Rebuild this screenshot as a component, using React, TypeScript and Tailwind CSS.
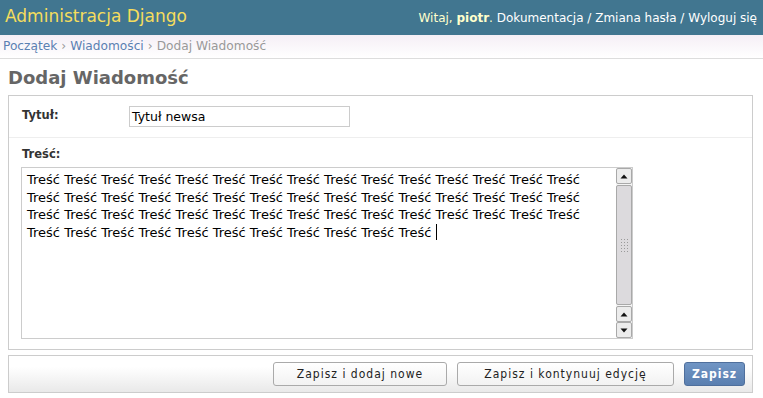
import React from "react";

const WORD = "Treść";

function line(n: number) {
  return Array.from({ length: n }, () => WORD).join(" ");
}

function Arrow({ down }: { down?: boolean }) {
  return (
    <svg width="8" height="5" viewBox="0 0 8 5" className="block">
      {down ? <path d="M0.5 0.5h7L4 4.5z" fill="#111" /> : <path d="M0.5 4.5h7L4 0.5z" fill="#111" />}
    </svg>
  );
}

function ScrollButton({ down }: { down?: boolean }) {
  return (
    <div className="h-[16px] w-full rounded-[2px] border border-[#a9a9a9] bg-[#ececec] flex items-center justify-center">
      <Arrow down={down} />
    </div>
  );
}

function FakeScrollbar() {
  return (
    <div className="absolute right-0 top-0 bottom-0 w-[16px] flex flex-col bg-[#f4f4f4]">
      <ScrollButton />
      <div className="flex-1 mt-px mb-px rounded-[2px] border border-[#a9a9a9] bg-[#dcdadd] flex items-center justify-center">
        <div className="grid grid-cols-3 gap-x-[2px] gap-y-[2px]">
          {Array.from({ length: 15 }).map((_, i) => (
            <span key={i} className="w-px h-px bg-[#9a9a9a]" />
          ))}
        </div>
      </div>
      <ScrollButton />
      <ScrollButton down />
    </div>
  );
}

export default function App() {
  return (
    <div className="w-[763px] h-[398px] bg-white font-['DejaVu_Sans',sans-serif] text-[#333] overflow-hidden">
      {/* header */}
      <div className="h-[35px] bg-[#417690] flex items-center justify-between pl-[5px] pr-[6px]">
        <span className="text-[17px] leading-[20px] text-[#f5dd5d] pb-[3px]">Administracja Django</span>
        <span className="text-[12px] leading-[14px] text-white">
          <span className="text-[#ffffcc]">
            Witaj, <strong className="font-bold">piotr</strong>.
          </span>{" "}
          Dokumentacja / Zmiana hasła / Wyloguj się
        </span>
      </div>

      {/* breadcrumbs */}
      <div className="h-[24px] border-b border-[#dddddd] bg-linear-to-b from-[#f5eff6] to-white flex items-center pl-[3px] text-[12.2px] text-[#999]">
        <span className="text-[#5b80b2]">Początek</span>
        <span className="mx-[4px]">›</span>
        <span className="text-[#5b80b2]">Wiadomości</span>
        <span className="mx-[4px]">›</span>
        <span>Dodaj Wiadomość</span>
      </div>

      <div className="px-[8px] pt-[8px]">
        <h1 className="text-[18px] leading-[21px] font-bold text-[#666] mb-[7px]">Dodaj Wiadomość</h1>

        {/* fieldset */}
        <div className="w-[745px] border border-[#cccccc]">
          <div className="flex items-start pl-[13px] pt-[10px] pb-[10px] border-b border-[#eeeeee]">
            <label className="w-[107px] text-[11.5px] leading-[14px] font-bold text-[#333] pt-[2px]">Tytuł:</label>
            <div className="w-[221px] h-[21px] border border-[#cccccc] pl-[2px] text-[12.5px] leading-[19px] text-black">
              Tytuł newsa
            </div>
          </div>

          <div className="pl-[12px] pt-[9px] pb-[10px]">
            <label className="block text-[11.5px] leading-[14px] font-bold text-[#333] pl-px mb-[6px]">Treść:</label>
            <div className="relative w-[612px] h-[172px] border border-[#cccccc] bg-white">
              <div className="pl-[5px] pt-[3px] text-[13px] leading-[17.5px] text-black whitespace-nowrap">
                <div>{line(15)}</div>
                <div>{line(15)}</div>
                <div>{line(15)}</div>
                <div className="flex items-center">
                  <span>{line(11)}&nbsp;</span>
                  <span className="w-px h-[16px] bg-black" />
                </div>
              </div>
              <FakeScrollbar />
            </div>
          </div>
        </div>

        {/* submit row */}
        <div className="mt-[5px] w-[745px] h-[38px] border border-[#cccccc] bg-linear-to-b from-white from-30% to-[#e9e9e9] flex items-center justify-end gap-[10px] pr-[7px]">
          <button className="w-[174px] h-[24px] rounded-[3px] border border-[#aaaaaa] bg-linear-to-b from-white to-[#f2f2f2] text-[12px] tracking-[1px] text-[#222] font-['DejaVu_Sans_Condensed','DejaVu_Sans',sans-serif]">
            Zapisz i dodaj nowe
          </button>
          <button className="w-[217px] h-[24px] rounded-[3px] border border-[#aaaaaa] bg-linear-to-b from-white to-[#f2f2f2] text-[12px] tracking-[1px] text-[#222] font-['DejaVu_Sans_Condensed','DejaVu_Sans',sans-serif]">
            Zapisz i kontynuuj edycję
          </button>
          <button className="w-[61px] h-[24px] rounded-[3px] border border-[#4f6f9c] bg-linear-to-b from-[#7095c4] to-[#5a7fb0] text-[12px] tracking-[1px] font-bold text-white font-['DejaVu_Sans_Condensed','DejaVu_Sans',sans-serif]">
            Zapisz
          </button>
        </div>
      </div>
    </div>
  );
}
